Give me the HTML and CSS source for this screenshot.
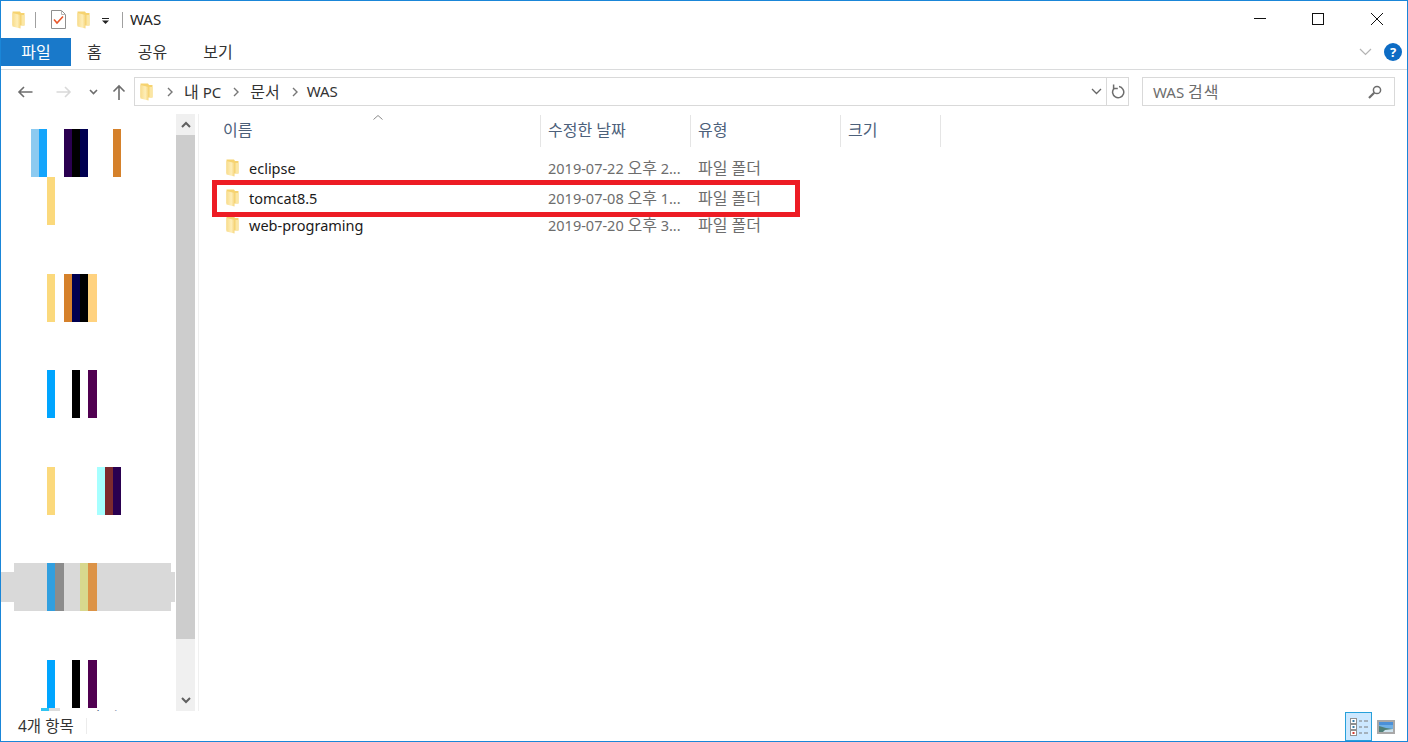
FILE: index.html
```html
<!DOCTYPE html>
<html lang="ko">
<head>
<meta charset="UTF-8">
<title>WAS</title>
<link rel="stylesheet" href="styles.css">
</head>
<body>

<svg class="defs" width="0" height="0">
    <defs>
        <linearGradient id="folderFront" x1="0" y1="0" x2="1" y2="0">
            <stop offset="0" stop-color="#f8dc8c"/>
            <stop offset="0.6" stop-color="#feeeb8"/>
            <stop offset="1" stop-color="#f6d57c"/>
        </linearGradient>
        <symbol id="folder" viewBox="0 0 13 18">
            <path d="M0.5 0.5 H8 L9 2 H12.5 V14.5 H0.5 Z" fill="#f6d370"/>
            <path d="M0.5 2 L8.5 4 V17.5 L0.5 15.5 Z" fill="url(#folderFront)"/>
            <path d="M9.5 4 H12.5 V14.5 H9.5 Z" fill="#fbe6a4"/>
        </symbol>
    </defs>
</svg>

<div class="window">

    <div class="titlebar">
        <svg class="qa-folder" width="13" height="18"><use href="#folder"/></svg>
        <span class="qa-sep"></span>
        <svg class="qa-check" width="15" height="19" viewBox="0 0 15 19">
            <path d="M0.5 0.5 H10.5 L14.5 4.5 V18.5 H0.5 Z" fill="#fff" stroke="#8f8f8f"/>
            <path d="M10.5 0.5 V4.5 H14.5" fill="none" stroke="#b5b5b5"/>
            <path d="M3 9.5 L6 13 L12 6.5" fill="none" stroke="#e8562a" stroke-width="1.6"/>
        </svg>
        <svg class="qa-folder2" width="13" height="18"><use href="#folder"/></svg>
        <svg class="qa-drop" width="7" height="6" viewBox="0 0 7 6">
            <rect x="0" y="0" width="7" height="1" fill="#222"/>
            <path d="M0 2.5 H7 L3.5 6 Z" fill="#222"/>
        </svg>
        <span class="qa-sep qa-sep-2"></span>
        <span class="title">WAS</span>
        <div class="winbtns">
            <svg width="14" height="14" viewBox="0 0 14 14"><path d="M1 6.5 H13" stroke="#111"/></svg>
            <svg width="14" height="14" viewBox="0 0 14 14"><rect x="1.5" y="1.5" width="11" height="11" fill="none" stroke="#111"/></svg>
            <svg class="btn-close" width="14" height="14" viewBox="0 0 14 14"><path d="M1 1 L13 13 M13 1 L1 13" stroke="#111"/></svg>
        </div>
    </div>

    <div class="ribbon">
        <span class="tab tab-file">파일</span>
        <span class="tab tab-home">홈</span>
        <span class="tab tab-share">공유</span>
        <span class="tab tab-view">보기</span>
        <svg class="ribbon-chev" width="13" height="8" viewBox="0 0 13 8"><path d="M1 1 L6.5 6.5 L12 1" fill="none" stroke="#b4b4b4" stroke-width="1.2"/></svg>
        <span class="help">?</span>
    </div>

    <div class="addressrow">
        <svg class="nav-btn nav-back" width="16" height="12" viewBox="0 0 16 12"><path d="M15.5 6 H2 M7 1 L2 6 L7 11" fill="none" stroke="#6d6d6d" stroke-width="1.6"/></svg>
        <svg class="nav-btn nav-fwd" width="16" height="12" viewBox="0 0 16 12"><path d="M0.5 6 H14 M9 1 L14 6 L9 11" fill="none" stroke="#d9d9d9" stroke-width="1.6"/></svg>
        <svg class="nav-btn nav-down" width="9" height="6" viewBox="0 0 9 6"><path d="M1 1 L4.5 4.5 L8 1" fill="none" stroke="#6d6d6d" stroke-width="1.6"/></svg>
        <svg class="nav-btn nav-up" width="14" height="16" viewBox="0 0 14 16"><path d="M7 16 V2 M1.5 7.5 L7 2 L12.5 7.5" fill="none" stroke="#6d6d6d" stroke-width="1.6"/></svg>
        <div class="addressbox">
            <svg class="addr-folder" width="13" height="18"><use href="#folder"/></svg>
            <svg class="crumb-chev chev-first" width="6" height="10" viewBox="0 0 6 10"><path d="M1 1 L5 5 L1 9" fill="none" stroke="#777" stroke-width="1.4"/></svg>
            <span class="crumb"><span class="ko">내</span> PC</span>
            <svg class="crumb-chev" width="6" height="10" viewBox="0 0 6 10"><path d="M1 1 L5 5 L1 9" fill="none" stroke="#777" stroke-width="1.4"/></svg>
            <span class="crumb ko">문서</span>
            <svg class="crumb-chev chev-last" width="6" height="10" viewBox="0 0 6 10"><path d="M1 1 L5 5 L1 9" fill="none" stroke="#777" stroke-width="1.4"/></svg>
            <span class="crumb">WAS</span>
            <svg class="addr-drop" width="11" height="7" viewBox="0 0 11 7"><path d="M1 1 L5.5 5.5 L10 1" fill="none" stroke="#666" stroke-width="1.3"/></svg>
            <span class="addr-refresh">
                <svg width="14" height="15" viewBox="0 0 14 15"><path d="M8 2.6 A5.6 5.6 0 1 1 3 4.4" fill="none" stroke="#6d6d6d" stroke-width="1.5"/><path d="M2.6 0.5 V4.6 H6.8" fill="none" stroke="#6d6d6d" stroke-width="1.5"/></svg>
            </span>
        </div>
        <div class="searchbox">
            <span class="search-text">WAS <span class="ko">검색</span></span>
            <svg width="14" height="14" viewBox="0 0 14 14"><circle cx="9" cy="5" r="3.6" fill="none" stroke="#6d6d6d" stroke-width="1.5"/><path d="M6.2 7.8 L1 13" stroke="#6d6d6d" stroke-width="2.2"/></svg>
        </div>
    </div>

    <div class="main">
        <div class="nav">
            <div class="band band-1">
                <i class="bar c-sky"></i><i class="bar c-blue"></i>
                <i class="bar c-purple ml-17"></i><i class="bar c-black"></i><i class="bar c-navy"></i>
                <i class="bar c-orange ml-25"></i>
            </div>
            <div class="band band-2"><i class="bar c-yellow"></i></div>
            <div class="band band-3">
                <i class="bar c-yellow"></i>
                <i class="bar c-orange ml-9"></i><i class="bar c-navy"></i><i class="bar c-black"></i><i class="bar wide c-peach"></i>
            </div>
            <div class="band band-4">
                <i class="bar c-azure"></i>
                <i class="bar c-black ml-17"></i>
                <i class="bar wide c-plum ml-8"></i>
            </div>
            <div class="band band-5">
                <i class="bar c-yellow"></i>
                <i class="bar c-aqua ml-42"></i><i class="bar c-maroon"></i><i class="bar c-purple"></i>
            </div>
            <div class="band band-6 selected">
                <i class="bar c-sel-blue"></i><i class="bar wide c-sel-gray"></i>
                <i class="bar c-sel-yellow ml-16"></i><i class="bar wide c-sel-orange"></i>
            </div>
            <div class="band band-7">
                <i class="bar c-azure"></i>
                <i class="bar c-black ml-17"></i>
                <i class="bar wide c-plum ml-8"></i>
            </div>
            <div class="nav-cut">
                <i class="cut-icon"></i>
                <span>로컬 디스크 (C:)</span>
            </div>
        </div>

        <div class="scrollbar">
            <div class="scroll-btn">
                <svg width="10" height="7" viewBox="0 0 10 7"><path d="M1 6 L5 2 L9 6" fill="none" stroke="#606060" stroke-width="2"/></svg>
            </div>
            <div class="scroll-thumb"></div>
            <div class="scroll-rest"></div>
            <div class="scroll-btn">
                <svg width="10" height="7" viewBox="0 0 10 7"><path d="M1 1 L5 5 L9 1" fill="none" stroke="#606060" stroke-width="2"/></svg>
            </div>
        </div>

        <div class="files">
            <div class="sort-caret">
                <svg width="10" height="5" viewBox="0 0 10 5"><path d="M0.5 4.5 L5 0.5 L9.5 4.5" fill="none" stroke="#8a8a8a"/></svg>
            </div>
            <div class="colhead">
                <span class="col col-name ko">이름</span>
                <span class="col col-date ko">수정한 날짜</span>
                <span class="col col-type ko">유형</span>
                <span class="col col-size ko">크기</span>
            </div>
            <div class="row row-first">
                <span class="col-name name"><svg width="13" height="18"><use href="#folder"/></svg>eclipse</span>
                <span class="col-date meta">2019-07-22 <span class="ko">오후</span> 2...</span>
                <span class="col-type meta ko">파일 폴더</span>
            </div>
            <div class="row row-tomcat">
                <span class="col-name name"><svg width="13" height="18"><use href="#folder"/></svg>tomcat8.5</span>
                <span class="col-date meta">2019-07-08 <span class="ko">오후</span> 1...</span>
                <span class="col-type meta ko">파일 폴더</span>
                <div class="highlight"></div>
            </div>
            <div class="row row-web">
                <span class="col-name name"><svg width="13" height="18"><use href="#folder"/></svg>web-programing</span>
                <span class="col-date meta">2019-07-20 <span class="ko">오후</span> 3...</span>
                <span class="col-type meta ko">파일 폴더</span>
            </div>
        </div>
    </div>

    <div class="statusbar">
        <span class="count">4개 항목</span>
        <div class="viewbtns">
            <span class="viewbtn active">
                <svg width="18" height="20" viewBox="0 0 18 20">
                    <rect x="0.5" y="1.5" width="6" height="5" fill="#fff" stroke="#8f8f8f"/><rect x="2.5" y="3" width="2" height="2" fill="#3a7ca5"/>
                    <rect x="0.5" y="7.5" width="6" height="5" fill="#fff" stroke="#8f8f8f"/><rect x="2.5" y="9" width="2" height="2" fill="#3a7ca5"/>
                    <rect x="0.5" y="13.5" width="6" height="5" fill="#fff" stroke="#8f8f8f"/><rect x="2.5" y="15" width="2" height="2" fill="#d2372c"/>
                    <path d="M9 4 H12 M14 4 H18 M9 10 H12 M14 10 H18 M9 16 H12 M14 16 H18" stroke="#7a7a7a"/>
                </svg>
            </span>
            <span class="viewbtn">
                <svg width="18" height="14" viewBox="0 0 18 14">
                    <rect x="0" y="0" width="18" height="14" fill="#a8a8a8"/>
                    <rect x="2" y="2" width="14" height="10" fill="#6fb0e6"/>
                    <path d="M2 2 H16 V5 H2 Z" fill="#4b90d8"/>
                    <path d="M2 6 L9 8 L16 9 V12 H2 Z" fill="#4f8078"/>
                    <path d="M8 10 L16 9 V12 H6 Z" fill="#cfe3ee"/>
                </svg>
            </span>
        </div>
    </div>

</div>

</body>
</html>
```

FILE: styles.css
```css
html, body {
  margin: 0;
  padding: 0;
  height: 100%;
  overflow: hidden;
}

body {
  font-family: "Noto Sans", "Noto Sans CJK KR", sans-serif;
  font-size: 14.5px;
  color: #1a1a1a;
  background: #fff;
}

.defs {
  position: absolute;
}

svg {
  display: block;
  flex: none;
}

.ko {
  font-size: 16px;
}

.window {
  box-sizing: border-box;
  width: 1408px;
  height: 742px;
  border: 1px solid #1a86d8;
  display: flex;
  flex-direction: column;
}

/* title bar */
.titlebar {
  height: 37px;
  display: flex;
  align-items: center;
  padding-left: 11px;
  flex: none;
}

.qa-sep {
  width: 1px;
  height: 16px;
  background: #a0a0a0;
  margin-left: 10px;
}

.qa-check {
  margin-left: 15px;
}

.qa-folder2 {
  margin-left: 11px;
}

.qa-drop {
  margin-left: 12px;
  margin-top: 3px;
}

.qa-sep-2 {
  margin-left: 13px;
}

.title {
  margin-left: 7px;
  margin-top: -2px;
  font-size: 15px;
  color: #222;
}

.winbtns {
  margin-left: auto;
  margin-top: -1px;
  display: flex;
  gap: 44px;
  padding-right: 23px;
}

.btn-close {
  margin-left: 1px;
}

/* ribbon tabs */
.ribbon {
  height: 32px;
  flex: none;
  box-sizing: border-box;
  border-bottom: 1px solid #dadbdc;
  display: flex;
  align-items: flex-start;
}

.tab {
  height: 28px;
  line-height: 28px;
  font-size: 16px;
  text-align: center;
  color: #333;
}

.tab-file {
  width: 70px;
  background: #1979ca;
  color: #fff;
}

.tab-home {
  margin-left: 16px;
}

.tab-share {
  margin-left: 36px;
}

.tab-view {
  margin-left: 36px;
}

.ribbon-chev {
  margin-left: auto;
  margin-top: 10px;
}

.help {
  width: 18px;
  height: 18px;
  border-radius: 50%;
  background: #0d6cc4;
  color: #fff;
  font-size: 13px;
  font-weight: 700;
  line-height: 18px;
  text-align: center;
  margin: 5px 5px 0 12px;
}

/* address row */
.addressrow {
  height: 43px;
  flex: none;
  display: flex;
  align-items: center;
  padding-left: 16px;
  box-sizing: border-box;
  color: #333;
}

.nav-fwd {
  margin-left: 23px;
}

.nav-down {
  margin-left: 17px;
}

.nav-up {
  margin-left: 14px;
}

.addressbox {
  box-sizing: border-box;
  width: 995px;
  height: 29px;
  margin-left: 8px;
  border: 1px solid #d9d9d9;
  display: flex;
  align-items: center;
  padding-left: 5px;
  font-size: 15px;
}

.crumb {
  margin-top: -2px;
}

.crumb-chev {
  margin: 0 11px 0 12px;
}

.crumb-chev.chev-first {
  margin-left: 14px;
}

.crumb-chev.chev-last {
  margin-right: 9px;
}

.addr-drop {
  margin-left: auto;
  margin-right: 2px;
}

.addr-refresh {
  height: 100%;
  width: 20px;
  margin-left: 2px;
  border-left: 1px solid #d9d9d9;
  display: flex;
  align-items: center;
  justify-content: center;
  padding-left: 1px;
}

.searchbox {
  box-sizing: border-box;
  width: 253px;
  height: 29px;
  margin-left: 13px;
  border: 1px solid #d9d9d9;
  display: flex;
  align-items: center;
  justify-content: space-between;
  padding: 0 12px 0 10px;
  color: #6d6d6d;
  font-size: 15px;
}

.search-text {
  margin-top: -2px;
}

.search-text .ko {
  letter-spacing: 1px;
}

/* main area */
.main {
  flex: 1;
  min-height: 0;
  display: flex;
}

.nav {
  width: 174px;
  flex: none;
  overflow: hidden;
  padding-top: 16px;
  box-sizing: border-box;
}

.band {
  height: 48px;
  display: flex;
  padding-left: 46px;
}

.band-1 {
  padding-left: 30px;
}

.band-3,
.band-5,
.band-7 {
  margin-top: 49px;
}

.band-4,
.band-6 {
  margin-top: 48px;
}

.bar {
  width: 8px;
  height: 100%;
  flex: none;
}

.bar.wide {
  width: 9px;
}

.ml-8 { margin-left: 8px; }
.ml-9 { margin-left: 9px; }
.ml-16 { margin-left: 16px; }
.ml-17 { margin-left: 17px; }
.ml-25 { margin-left: 25px; }
.ml-42 { margin-left: 42px; }

.c-sky { background: #8ccaf0; }
.c-blue { background: #14a5fb; }
.c-purple { background: #2a0050; }
.c-black { background: #000; }
.c-navy { background: #000050; }
.c-orange { background: #d5812b; }
.c-yellow { background: #fbd97c; }
.c-peach { background: #ffd27f; }
.c-azure { background: #00a5ff; }
.c-plum { background: #500050; }
.c-aqua { background: #a6ffff; }
.c-maroon { background: #7d2a2e; }
.c-sel-blue { background: #319fdf; }
.c-sel-gray { background: #8c8c8c; }
.c-sel-yellow { background: #d8d88e; }
.c-sel-orange { background: #dc9347; }

.band.selected {
  background:
    linear-gradient(#d9d9d9, #d9d9d9) 0 9px / 100% 30px no-repeat,
    linear-gradient(#d9d9d9, #d9d9d9) 13px 0 / 157px 100% no-repeat;
}

.nav-cut {
  display: flex;
  align-items: flex-start;
  padding-left: 40px;
  font-size: 15px;
  line-height: 16px;
  color: #223a6b;
}

.cut-icon {
  width: 19px;
  height: 14px;
  background: linear-gradient(90deg, #2fc4f2 40%, #dcdcdc 40%);
  flex: none;
}

.nav-cut span {
  margin-left: 13px;
  margin-top: 1px;
  white-space: nowrap;
}

.scrollbar {
  width: 19px;
  margin-left: 1px;
  margin-top: 1px;
  flex: none;
  display: flex;
  flex-direction: column;
  background: #f0f0f0;
}

.scroll-btn {
  height: 21px;
  flex: none;
  display: flex;
  align-items: center;
  justify-content: center;
}

.scroll-thumb {
  height: 504px;
  background: #cdcdcd;
  flex: none;
}

.scroll-rest {
  flex: 1;
}

/* file list */
.files {
  flex: 1;
  margin-left: 3px;
  margin-top: 1px;
  border-left: 1px solid #f0f0f0;
  padding-left: 17px;
  display: flex;
  flex-direction: column;
}

.sort-caret {
  height: 0;
  padding-left: 157px;
  padding-top: 1px;
}

.colhead {
  height: 32px;
  display: flex;
  align-items: center;
  color: #4c607a;
  flex: none;
}

.col {
  box-sizing: border-box;
  height: 32px;
  line-height: 30px;
  border-right: 1px solid #e5e5e5;
}

.col-name {
  width: 325px;
  padding-left: 7px;
  flex: none;
}

.col-date {
  width: 150px;
  padding-left: 7px;
  flex: none;
}

.col-type {
  width: 150px;
  padding-left: 7px;
  flex: none;
}

.col-size {
  width: 100px;
  padding-left: 7px;
  flex: none;
}

.row {
  height: 28px;
  display: flex;
  align-items: center;
}

.row-first {
  margin-top: 7px;
}

.row-tomcat {
  position: relative;
  height: 30px;
  padding-top: 2px;
  box-sizing: border-box;
}

.row-web {
  height: 26px;
}

.name {
  display: flex;
  align-items: center;
  padding-left: 10px;
  box-sizing: border-box;
  gap: 10px;
  color: #1a1a1a;
}

.meta {
  box-sizing: border-box;
  color: #6d6d6d;
  margin-top: -2px;
}

.highlight {
  position: absolute;
  left: -4px;
  top: -2px;
  width: 588px;
  height: 37px;
  box-sizing: border-box;
  border: 5px solid #ed1c24;
}

/* status bar */
.statusbar {
  height: 30px;
  flex: none;
  display: flex;
  align-items: center;
  font-size: 15.5px;
  color: #333;
}

.count {
  padding-left: 17px;
  padding-right: 12px;
  border-right: 1px solid #ececec;
  line-height: 16px;
  margin-top: -1px;
}

.viewbtns {
  margin-left: auto;
  display: flex;
  margin-right: 8px;
  margin-top: 1px;
}

.viewbtn {
  width: 27px;
  height: 29px;
  box-sizing: border-box;
  display: flex;
  align-items: center;
  justify-content: center;
}

.viewbtn.active {
  background: #cce8ff;
  border: 1px solid #26a0da;
}
```
